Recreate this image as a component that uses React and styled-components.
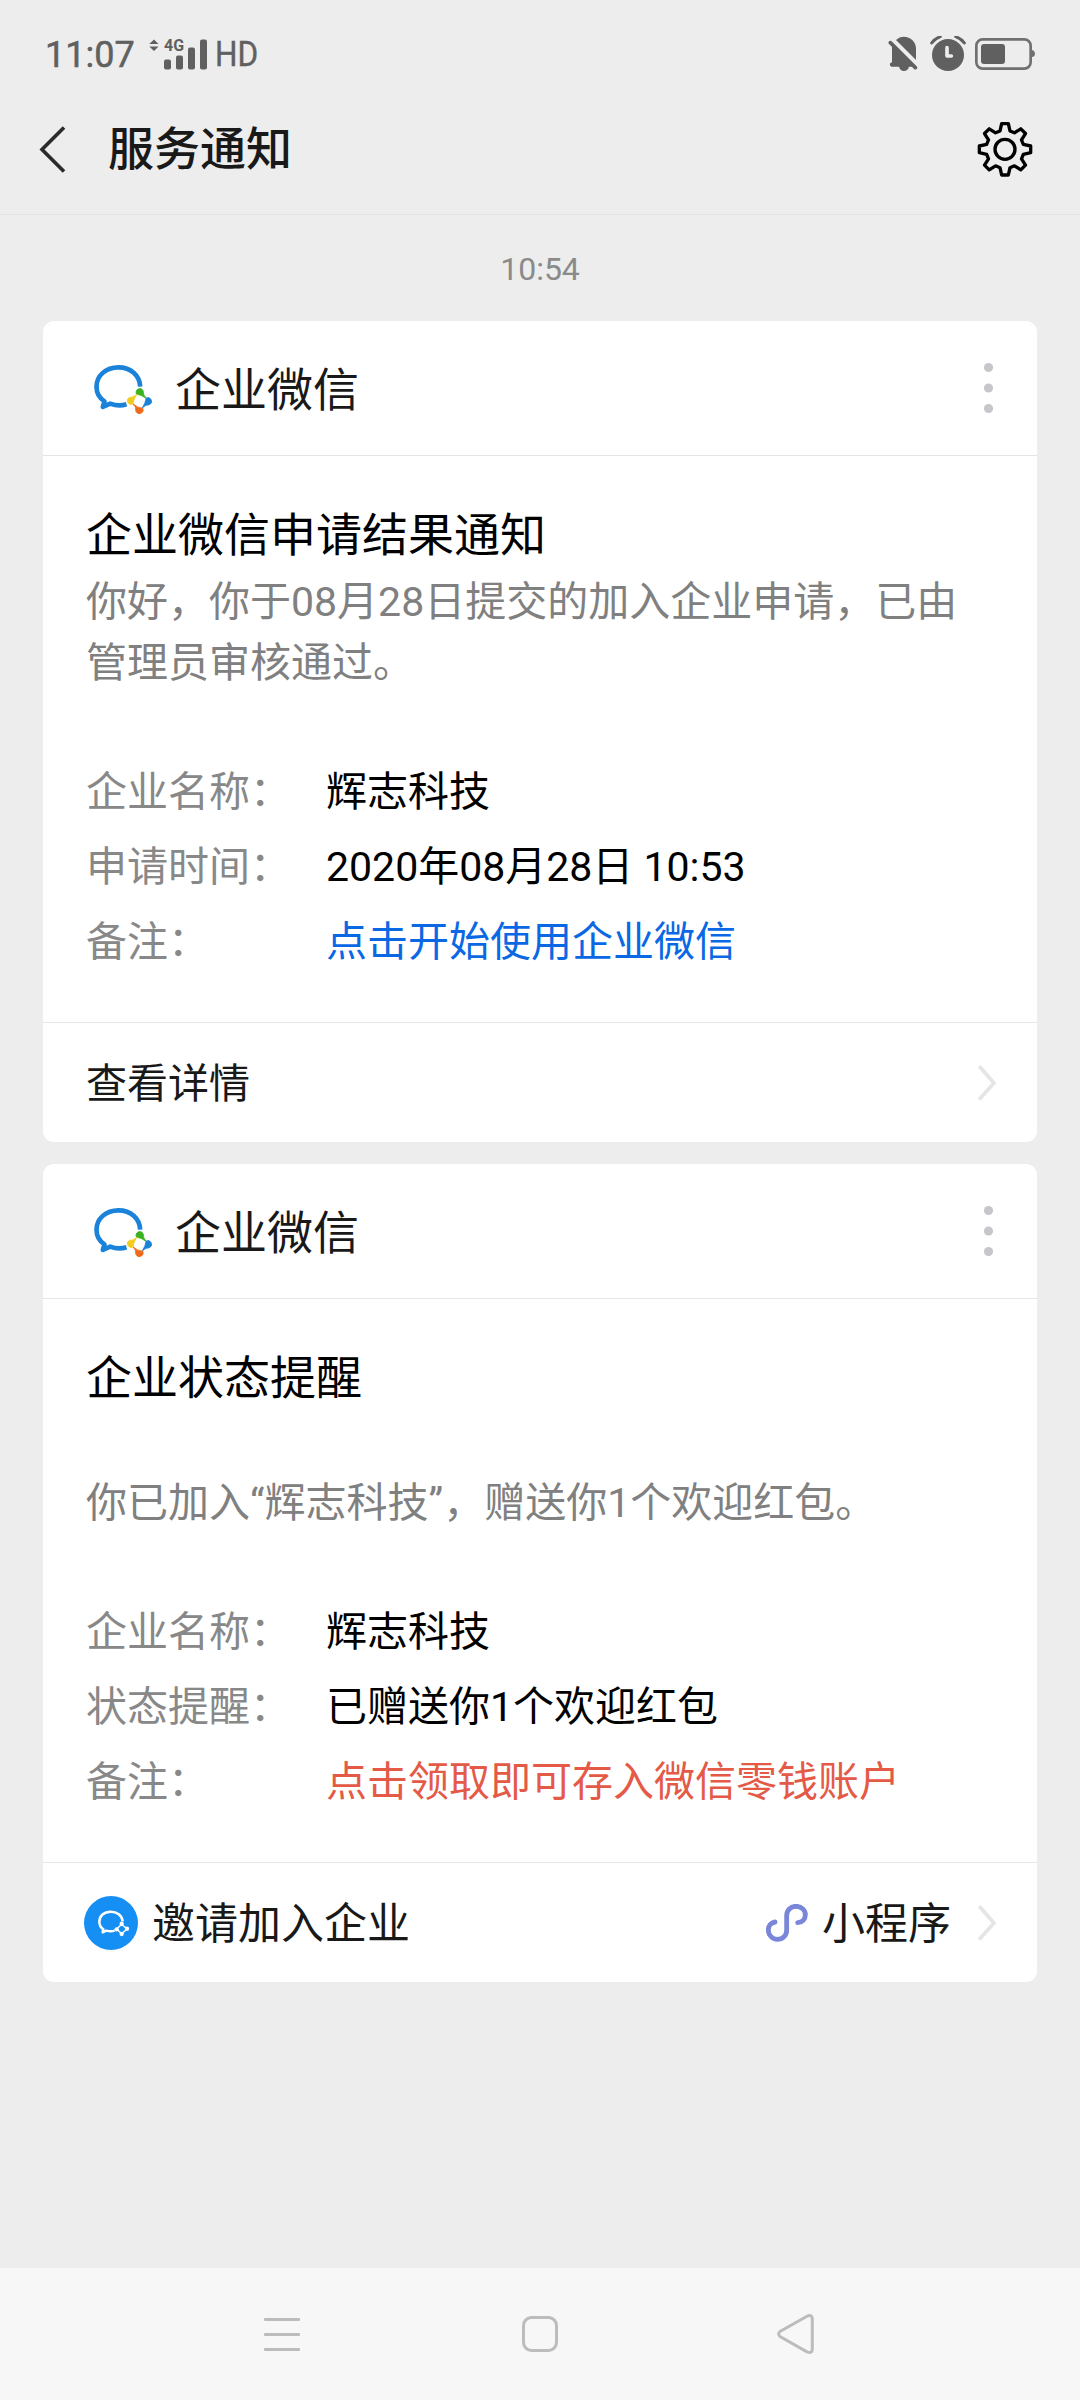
import React from "react"
import styled, { createGlobalStyle } from "styled-components"

const GlobalStyle = createGlobalStyle`
  * {
    box-sizing: border-box;
  }

  body {
    margin: 0;
    background: #ededed;
    font-family: Roboto, "Noto Sans CJK SC", sans-serif;
  }

  svg {
    display: block;
    flex: none;
  }

  h1, h2, p, dl, dt, dd {
    margin: 0;
    font-weight: 400;
  }
`

const Screen = styled.div`
  display: flex;
  flex-direction: column;
  width: 1080px;
  height: 2400px;
  background: #ededed;
`

const StatusBar = styled.div`
  display: flex;
  align-items: center;
  height: 108px;
  padding: 0 44px 0 45px;
  color: #606060;
`

const Clock = styled.span`
  width: 104px;
  padding-top: 2px;
  font-size: 36px;
  line-height: 48px;
  -webkit-text-stroke: 0.5px currentColor;
`

const Network = styled.span`
  margin-left: 7px;
  padding-top: 1px;
  font-size: 35px;
  line-height: 48px;
  transform: scaleX(0.9);
  transform-origin: left center;
  -webkit-text-stroke: 0.4px currentColor;
`

const StatusIcons = styled.div`
  display: flex;
  margin-left: auto;
`

const TitleBar = styled.header`
  display: flex;
  align-items: center;
  height: 107px;
  padding: 0 47px 24px 39px;
  border-bottom: 1px solid #e2e2e2;
`

const PageTitle = styled.h1`
  margin-left: 41px;
  margin-right: auto;
  color: #191919;
  font-size: 46px;
  font-weight: 500;
  line-height: 60px;
`

const Feed = styled.main`
  display: flex;
  flex: 1;
  flex-direction: column;
  padding: 0 43px;
`

const Time = styled.div`
  height: 106px;
  color: #8a8a8a;
  font-size: 32px;
  line-height: 108px;
  text-align: center;
`

const Card = styled.section`
  margin-bottom: 22px;
  border-radius: 11px;
  background: #fff;
`

const CardHeader = styled.div`
  display: flex;
  align-items: center;
  height: 135px;
  padding: 0 43px 0 46px;
  border-bottom: 1px solid #e5e5e5;
`

const Sender = styled.div`
  margin-left: 19px;
  margin-right: auto;
  padding-top: 3px;
  color: #191919;
  font-size: 46px;
  line-height: 60px;
`

const CardBody = styled.div`
  height: ${props => props.$height}px;
  padding: 46px 43px 0;
`

const CardTitle = styled.h2`
  color: #000;
  font-size: 46px;
  line-height: 67px;
`

const Message = styled.p`
  padding: ${props => (props.$spaced ? "61px 0 61px" : "3px 0 61px")};
  color: #808080;
  font-size: 41px;
  line-height: 61px;
`

const Row = styled.dl`
  display: flex;
  height: 75px;
  font-size: 41px;
  line-height: 75px;
`

const Label = styled.dt`
  width: 240px;
  color: #888;
`

const Value = styled.dd`
  color: ${props => props.$color || "#000"};
`

const CardFooter = styled.div`
  display: flex;
  align-items: center;
  height: 120px;
  padding: 0 41px 0 ${props => (props.$app ? 41 : 43)}px;
  border-top: 1px solid #e5e5e5;
  color: #191919;
  font-size: ${props => (props.$app ? 43 : 41)}px;
  line-height: 60px;
`

const FooterText = styled.span`
  margin-left: ${props => props.$left || 0}px;
  margin-right: ${props => props.$right || "auto"};
  padding-top: 2px;
`

const NavBar = styled.nav`
  display: flex;
  justify-content: space-between;
  align-items: center;
  height: 132px;
  padding: 0 266px 0 264px;
  background: #f7f7f7;
`

const SignalIcon = () => (
  <svg width="59" height="44" viewBox="0 -6 59 44" fill="#606060">
    <path d="M5 1.5 9.5 6H.3zM.3 8.5h9.2L5 13z" />
    <text x="15" y="13.2" fontFamily="Roboto" fontSize="16" fontWeight="700">
      4G
    </text>
    <rect x="15" y="21.5" width="7" height="10" rx="2" />
    <rect x="27" y="17.5" width="7" height="14" rx="2" />
    <rect x="39" y="9.5" width="7" height="22" rx="2" />
    <rect x="51" y="1.5" width="7" height="30" rx="2" />
  </svg>
)

const MutedIcon = () => (
  <svg width="42" height="36" viewBox="0 0 126 108" fill="#606060">
    <path d="M24 12Q34 2 47 2C68 2 84 18 84 38V72Z" />
    <path d="M12 30 74 92H63C60 109 36 109 33 92H10Q3 88 7 81L12 79Z" />
    <path
      d="M7 20 82 95"
      stroke="#606060"
      strokeWidth="11"
      strokeLinecap="round"
    />
  </svg>
)

const AlarmIcon = () => (
  <svg width="45" height="36" viewBox="0 0 135 108" fill="none">
    <circle cx="54" cy="57" r="48" fill="#606060" />
    <path
      d="M5 22Q14 7 32 1M103 22Q94 7 76 1"
      stroke="#ededed"
      strokeWidth="16"
    />
    <path
      d="M5 21Q14 8 31 2M103 21Q94 8 77 2"
      stroke="#606060"
      strokeWidth="9"
      strokeLinecap="round"
    />
    <path
      d="M51 35V60H64"
      stroke="#ededed"
      strokeWidth="11"
      strokeLinecap="round"
      strokeLinejoin="round"
    />
  </svg>
)

const BatteryIcon = () => (
  <svg width="61" height="36" viewBox="0 0 183 108" fill="#606060">
    <rect
      x="4"
      y="10"
      width="163"
      height="88"
      rx="19"
      fill="none"
      stroke="#707070"
      strokeWidth="8"
    />
    <rect x="18" y="24" width="72" height="60" rx="9" />
    <path d="M171 42Q180 45 180 53T171 63Z" fill="#707070" />
  </svg>
)

const BackIcon = () => (
  <svg width="28" height="48" viewBox="0 0 28 48" fill="none">
    <path d="M25 2.5 3 24.5 25 46.5" stroke="#2b2b2b" strokeWidth="3.6" />
  </svg>
)

// one tooth of the gear, repeated every 45 degrees
const tooth = [
  [-15, -55],
  [-10, -77],
  [10, -77],
  [15, -55],
]

const gearPoints = Array.from({ length: 8 }, (_, i) => {
  const a = (i * Math.PI) / 4
  return tooth
    .map(([x, y]) => [
      (x * Math.cos(a) - y * Math.sin(a)).toFixed(1),
      (x * Math.sin(a) + y * Math.cos(a)).toFixed(1),
    ])
    .join(" ")
}).join(" ")

const GearIcon = () => (
  <svg
    width="56"
    height="56"
    viewBox="-84 -85 168 168"
    fill="none"
    stroke="#000"
    strokeWidth="10"
    strokeLinejoin="round"
  >
    <polygon points={gearPoints} />
    <circle r="30" />
  </svg>
)

const bubblePath =
  "M150 80C149 46 121 22 85 22C47 22 19 47 19 80C19 98 28 114 43 124L38 141L60 131C76 137 93 138 109 133"

const WeComLogo = () => (
  <svg width="67" height="60" viewBox="-3 -6 200 180">
    <path
      d={bubblePath}
      fill="none"
      stroke="#1a82d8"
      strokeWidth="14"
      strokeLinejoin="round"
    />
    <g strokeWidth="2.5" strokeLinejoin="round">
      <path
        d="M139 102A11 11 0 1 1 159 93Q158 104 168 115Q154 105 139 102Z"
        fill="#3bb220"
        stroke="#3bb220"
      />
      <path
        d="M168 114A11 11 0 1 1 178 134Q167 133 156 144Q166 130 168 114Z"
        fill="#1a82d8"
        stroke="#1a82d8"
      />
      <path
        d="M158 145A11 11 0 1 1 137 154Q139 141 128 131Q141 143 158 145Z"
        fill="#ee6a18"
        stroke="#ee6a18"
      />
      <path
        d="M128 132A11 11 0 1 1 118 112Q129 114 140 103Q130 117 128 132Z"
        fill="#f2cb1d"
        stroke="#f2cb1d"
      />
    </g>
  </svg>
)

const InviteIcon = () => (
  <svg width="54" height="54" viewBox="0 0 162 162" fill="none">
    <circle cx="81" cy="81" r="81" fill="#168ff5" />
    <g stroke="#fff" strokeWidth="7.5" strokeLinejoin="round">
      <path d="M116 76C114 58 99 47 80 47C60 47 46 60 46 77C46 88 51 95 58 100L56 109L67 104C76 107 83 107 92 104" />
      <path d="M113 85 129 99 113 113 98 99Z" strokeWidth="4" />
    </g>
    <g fill="#fff">
      <circle cx="113" cy="83" r="6.5" />
      <circle cx="129" cy="98" r="6.5" />
      <circle cx="113" cy="114" r="6.5" />
      <circle cx="98" cy="100" r="6.5" />
    </g>
  </svg>
)

const MiniProgramIcon = () => (
  <svg width="42" height="38" viewBox="0 0 126 114" fill="none">
    <path
      d="M27 54C15 56 7 65 7 78C7 94 19 106 34 106C50 106 62 95 62 79V35C62 19 74 7 90 7C106 7 118 18 118 32C118 46 109 55 95 56"
      stroke="#7a87d8"
      strokeWidth="14.5"
      strokeLinecap="round"
    />
  </svg>
)

const ArrowIcon = () => (
  <svg width="18" height="36" viewBox="0 0 18 36" fill="none">
    <path d="M1.2 1.2 16 18 1.2 34.5" stroke="#e5e5e5" strokeWidth="3.8" />
  </svg>
)

const MoreIcon = () => (
  <svg width="11" height="52" viewBox="0 0 11 52" fill="#c7c7cb">
    <circle cx="5.5" cy="5.5" r="4.6" />
    <circle cx="5.5" cy="26" r="4.6" />
    <circle cx="5.5" cy="46.5" r="4.6" />
  </svg>
)

const RecentIcon = () => (
  <svg width="36" height="33" viewBox="0 0 36 33" fill="#bcbcbc">
    <rect width="36" height="3" rx="1" />
    <rect y="15" width="36" height="3" rx="1" />
    <rect y="30" width="36" height="3" rx="1" />
  </svg>
)

const HomeIcon = () => (
  <svg width="39" height="36" viewBox="-3 0 39 36" fill="none">
    <rect
      x="1.5"
      y="1.5"
      width="33"
      height="33"
      rx="8"
      stroke="#bcbcbc"
      strokeWidth="3"
    />
  </svg>
)

const NavBackIcon = () => (
  <svg width="37" height="40" viewBox="0 0 37 40" fill="none">
    <path
      d="M30 2.2 3 17.5Q.2 20 3 22.5L30 37.8Q35.3 40 35.3 35V5Q35.3 0 30 2.2Z"
      stroke="#bcbcbc"
      strokeWidth="3"
    />
  </svg>
)

const notices = [
  {
    id: "apply",
    title: "企业微信申请结果通知",
    message: ["你好，你于08月28日提交的加入企业申请，已由", "管理员审核通过。"],
    height: 566,
    rows: [
      { label: "企业名称：", value: "辉志科技" },
      { label: "申请时间：", value: "2020年08月28日 10:53" },
      { label: "备注：", value: "点击开始使用企业微信", color: "#0a68e4" },
    ],
  },
  {
    id: "status",
    title: "企业状态提醒",
    message: ["你已加入“辉志科技”，赠送你1个欢迎红包。"],
    height: 563,
    spaced: true,
    app: true,
    rows: [
      { label: "企业名称：", value: "辉志科技" },
      { label: "状态提醒：", value: "已赠送你1个欢迎红包" },
      { label: "备注：", value: "点击领取即可存入微信零钱账户", color: "#e45a47" },
    ],
  },
]

const Notice = ({ item }) => (
  <Card>
    <CardHeader>
      <WeComLogo />
      <Sender>企业微信</Sender>
      <MoreIcon />
    </CardHeader>
    <CardBody $height={item.height}>
      <CardTitle>{item.title}</CardTitle>
      <Message $spaced={item.spaced}>
        {item.message.map(line => (
          <React.Fragment key={line}>
            {line}
            <br />
          </React.Fragment>
        ))}
      </Message>
      {item.rows.map(row => (
        <Row key={row.label}>
          <Label>{row.label}</Label>
          <Value $color={row.color}>{row.value}</Value>
        </Row>
      ))}
    </CardBody>
    <CardFooter $app={item.app}>
      {item.app ? (
        <>
          <InviteIcon />
          <FooterText $left={14}>邀请加入企业</FooterText>
          <MiniProgramIcon />
          <FooterText $left={14} $right="27px">
            小程序
          </FooterText>
        </>
      ) : (
        <FooterText>查看详情</FooterText>
      )}
      <ArrowIcon />
    </CardFooter>
  </Card>
)

const App = () => (
  <>
    <GlobalStyle />
    <Screen>
      <StatusBar>
        <Clock>11:07</Clock>
        <SignalIcon />
        <Network>HD</Network>
        <StatusIcons>
          <MutedIcon />
          <AlarmIcon />
          <BatteryIcon />
        </StatusIcons>
      </StatusBar>
      <TitleBar>
        <BackIcon />
        <PageTitle>服务通知</PageTitle>
        <GearIcon />
      </TitleBar>
      <Feed>
        <Time>10:54</Time>
        {notices.map(item => (
          <Notice key={item.id} item={item} />
        ))}
      </Feed>
      <NavBar>
        <RecentIcon />
        <HomeIcon />
        <NavBackIcon />
      </NavBar>
    </Screen>
  </>
)

export default App
